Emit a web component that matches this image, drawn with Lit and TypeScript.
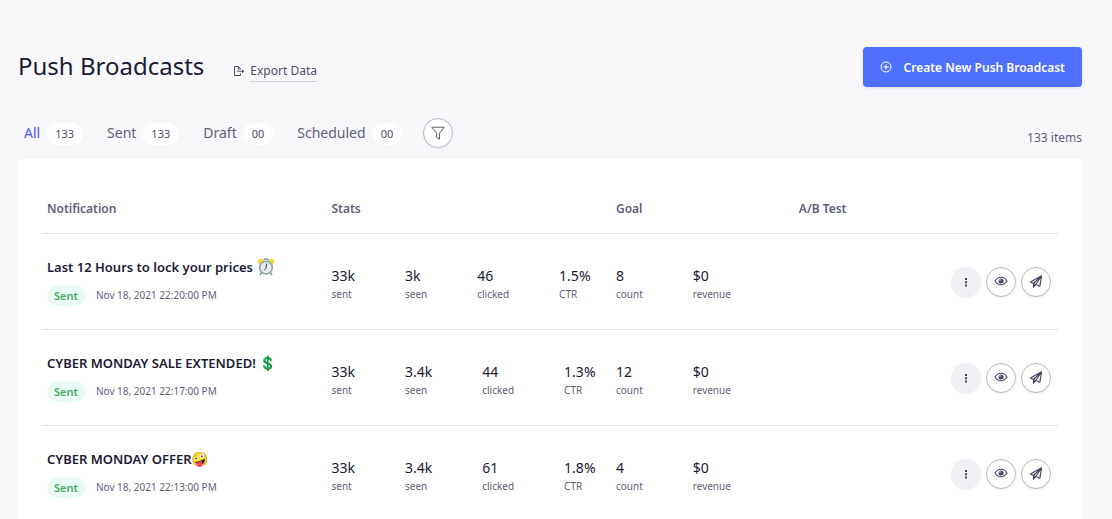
import { LitElement, html, css, svg } from "lit";
import { customElement, property, state } from "lit/decorators.js";
import { classMap } from "lit/directives/class-map.js";

interface Figure {
  value: string;
  label: string;
}

interface Broadcast {
  title: string;
  emoji: unknown;
  spaced: boolean;
  date: string;
  stats: Figure[];
  goal: Figure[];
}

const icon = (size: number, body: unknown) =>
  html`<svg width=${size} height=${size} viewBox="0 0 ${size} ${size}" fill="none" stroke="currentColor" aria-hidden="true">${body}</svg>`;

const exportIcon = icon(12, svg`<path d="M7.500 4V3.500L5.500 1.500H1.500v9h6V8.500M5.200 1.500V4h2.300M4 6.200h6" /><path d="M9 4.200l2.400 2L9 8.200z" fill="currentColor" stroke="none" />`);
const plusIcon = icon(12, svg`<circle cx="6" cy="6" r="5" /><path d="M6 3.200v5.600M3.200 6h5.600" />`);
const funnelIcon = icon(14, svg`<path d="M.8 1.200h12.400L8.500 7.200v6L5.600 11.400V7.200z" stroke="#615f78" stroke-linejoin="round" />`);
const dotsIcon = icon(12, svg`<path d="M5 2h2v2H5zM5 5.200h2v2H5zM5 8.400h2v2H5z" fill="currentColor" stroke="none" />`);
const eyeIcon = icon(14, svg`<path d="M1 6c1.600-2.500 3.600-3.700 6-3.700S11.400 3.500 13 6c-1.600 2.500-3.600 3.700-6 3.700S2.600 8.500 1 6z" stroke-width="1.100" /><circle cx="7" cy="6" r="2.500" fill="currentColor" stroke="none" /><circle cx="6" cy="5" r=".8" fill="#fff" stroke="none" />`);
const planeIcon = icon(14, svg`<path d="M12.600.8L1.400 7.100l3 1.400L12.600.8l-1.700 10.500-3.700-1.500M4.600 8.600v3.600l2-2.600M4.600 8.600l1.900 1.100L12.600.8" stroke-width="1.100" stroke-linejoin="round" />`);
const clock = html`<svg width="18" height="18" viewBox="0 0 18 18" role="img" aria-label="alarm clock">
  <path d="M4.500 14.500L3 17M13.500 14.500L15 17" stroke="#7d868c" stroke-width="1.400" />
  <circle cx="3.600" cy="3.600" r="2.900" fill="#f6d93b" />
  <circle cx="14.400" cy="3.600" r="2.900" fill="#f6d93b" />
  <path d="M6.500 2.200Q9-.2 11.500 2.200" fill="none" stroke="#8b959b" stroke-width="1.200" />
  <circle cx="9" cy="9.600" r="7.200" fill="#98a4ab" />
  <circle cx="9" cy="9.600" r="5.500" fill="#e8edf0" />
  <path d="M9.600 5.500L9 10.200l-1.600 2" fill="none" stroke="#333b42" stroke-width="1" />
</svg>`;

const stats = (sent: string, seen: string, clicked: string, ctr: string): Figure[] => [
  { value: sent, label: "sent" },
  { value: seen, label: "seen" },
  { value: clicked, label: "clicked" },
  { value: ctr, label: "CTR" },
];

const goal = (count: string, revenue: string): Figure[] => [
  { value: count, label: "count" },
  { value: revenue, label: "revenue" },
];

const BROADCASTS: Broadcast[] = [
  { title: "Last 12 Hours to lock your prices", emoji: clock, spaced: true, date: "Nov 18, 2021 22:20:00 PM", stats: stats("33k", "3k", "46", "1.5%"), goal: goal("8", "$0") },
  { title: "CYBER MONDAY SALE EXTENDED!", emoji: "💲", spaced: true, date: "Nov 18, 2021 22:17:00 PM", stats: stats("33k", "3.4k", "44", "1.3%"), goal: goal("12", "$0") },
  { title: "CYBER MONDAY OFFER", emoji: "🤪", spaced: false, date: "Nov 18, 2021 22:13:00 PM", stats: stats("33k", "3.4k", "61", "1.8%"), goal: goal("4", "$0") },
];

const TABS = [
  { name: "All", count: "133" },
  { name: "Sent", count: "133" },
  { name: "Draft", count: "00" },
  { name: "Scheduled", count: "00" },
];

@customElement("round-button")
class RoundButton extends LitElement {
  @property() label = "";
  @property({ type: Boolean }) filled = false;

  static styles = css`
    :host { display: block; }
    button {
      display: grid;
      place-items: center;
      width: 30px;
      height: 30px;
      padding: 0;
      border: 1px solid #b9b8c8;
      border-radius: 50%;
      background: #fff;
      color: #45435f;
      box-shadow: 0 1px 2px rgba(60, 60, 100, 0.08);
      cursor: pointer;
    }
    .filled { background: #f0eff5; border-color: #f0eff5; }
  `;

  render() {
    return html`<button class=${classMap({ filled: this.filled })} aria-label=${this.label}><slot></slot></button>`;
  }
}

@customElement("app-root")
class AppRoot extends LitElement {
  @state() active = "All";

  static styles = css`
    * { box-sizing: border-box; }
    :host {
      display: block;
      box-sizing: border-box;
      min-height: 100vh;
      padding: 47px 30px 0 18px;
      background: #f8f8fb;
      color: #1c1b35;
      font-family: "Noto Sans", "Noto Color Emoji", sans-serif;
    }
    svg { display: block; }
    button { font-family: inherit; cursor: pointer; }
    header { display: flex; align-items: center; height: 40px; }
    h1 { margin: 0 29px 0 0; padding-bottom: 2px; font-size: 24px; line-height: 36px; font-weight: 400; }
    .export { display: flex; align-items: center; gap: 5px; padding-top: 8px; color: #504e68; text-decoration: none; font-size: 12px; line-height: 20px; }
    .export span { border-bottom: 1px solid #d3d3da; }
    .create {
      display: flex;
      align-items: center;
      gap: 12px;
      height: 40px;
      margin-left: auto;
      padding: 0 17px;
      border: 0;
      border-radius: 4px;
      background: #4f6fff;
      color: #fff;
      font-size: 12px;
      font-weight: 600;
      box-shadow: 0 1px 3px rgba(60, 60, 120, 0.15);
    }
    .bar { display: flex; align-items: center; margin-top: 31px; padding-bottom: 11px; }
    .tabs { display: flex; gap: 24px; margin: 0 21px 0 6px; }
    .tab { display: flex; align-items: center; gap: 6px; padding: 0; border: 0; background: none; color: #615f78; font-size: 14px; line-height: 22px; }
    .tab.active { color: #4f55f8; }
    .count { min-width: 30px; margin-top: 1px; padding: 0 9px; border-radius: 11px; background: #fff; color: #504e68; font-size: 11px; line-height: 22px; text-align: center; }
    .total { margin-left: auto; padding-top: 10px; color: #615f78; font-size: 12px; line-height: 20px; }
    .card { padding: 24px; border-radius: 4px; background: #fff; }
    table { width: 100%; border-collapse: collapse; table-layout: fixed; }
    th, td { padding: 0 5px; text-align: left; vertical-align: middle; border-bottom: 1px solid #dfdfe4; }
    th { height: 50px; padding-top: 1px; color: #615f78; font-size: 12px; font-weight: 600; }
    td { height: 96px; }
    .wide { width: 28%; }
    .mid { width: 18%; }
    .narrow { width: 13%; }
    .title { display: flex; align-items: center; font-size: 13px; line-height: 22px; font-weight: 600; white-space: nowrap; }
    .title.spaced { gap: 4px; }
    .emoji { font-size: 14px; }
    .meta { display: flex; align-items: center; gap: 11px; margin-top: 7px; color: #615f78; font-size: 10px; line-height: 21px; }
    .status { padding: 0 7px; border-radius: 11px; background: #eafbf5; color: #46a868; font-size: 11px; font-weight: 600; }
    .figures { display: flex; gap: 50px; padding-top: 4px; white-space: nowrap; }
    .value { font-size: 14px; line-height: 22px; }
    .label { color: #615f78; font-size: 10px; line-height: 14px; }
    .actions { display: flex; justify-content: flex-end; gap: 5px; padding: 2px 2px 0 0; }
  `;

  figures(list: Figure[]) {
    return html`<div class="figures">
      ${list.map((f) => html`<div><div class="value">${f.value}</div><div class="label">${f.label}</div></div>`)}
    </div>`;
  }

  row(b: Broadcast) {
    return html`<tr>
      <td>
        <div class=${classMap({ title: true, spaced: b.spaced })}><span>${b.title}</span><span class="emoji">${b.emoji}</span></div>
        <div class="meta"><span class="status">Sent</span><time>${b.date}</time></div>
      </td>
      <td>${this.figures(b.stats)}</td>
      <td>${this.figures(b.goal)}</td>
      <td></td>
      <td>
        <div class="actions">
          <round-button label="More" filled>${dotsIcon}</round-button>
          <round-button label="Preview">${eyeIcon}</round-button>
          <round-button label="Send">${planeIcon}</round-button>
        </div>
      </td>
    </tr>`;
  }

  render() {
    return html`
      <header>
        <h1>Push Broadcasts</h1>
        <a class="export" href="#export">${exportIcon}<span>Export Data</span></a>
        <button class="create">${plusIcon}Create New Push Broadcast</button>
      </header>
      <div class="bar">
        <nav class="tabs">
          ${TABS.map((t) => html`<button class=${classMap({ tab: true, active: t.name === this.active })} @click=${() => (this.active = t.name)}>
            ${t.name}<span class="count">${t.count}</span>
          </button>`)}
        </nav>
        <round-button label="Filter">${funnelIcon}</round-button>
        <span class="total">133 items</span>
      </div>
      <div class="card">
        <table>
          <thead>
            <tr>
              <th class="wide">Notification</th>
              <th class="wide">Stats</th>
              <th class="mid">Goal</th>
              <th class="narrow">A/B Test</th>
              <th class="narrow" aria-label="Actions"></th>
            </tr>
          </thead>
          <tbody>${BROADCASTS.map((b) => this.row(b))}</tbody>
        </table>
      </div>
    `;
  }
}
